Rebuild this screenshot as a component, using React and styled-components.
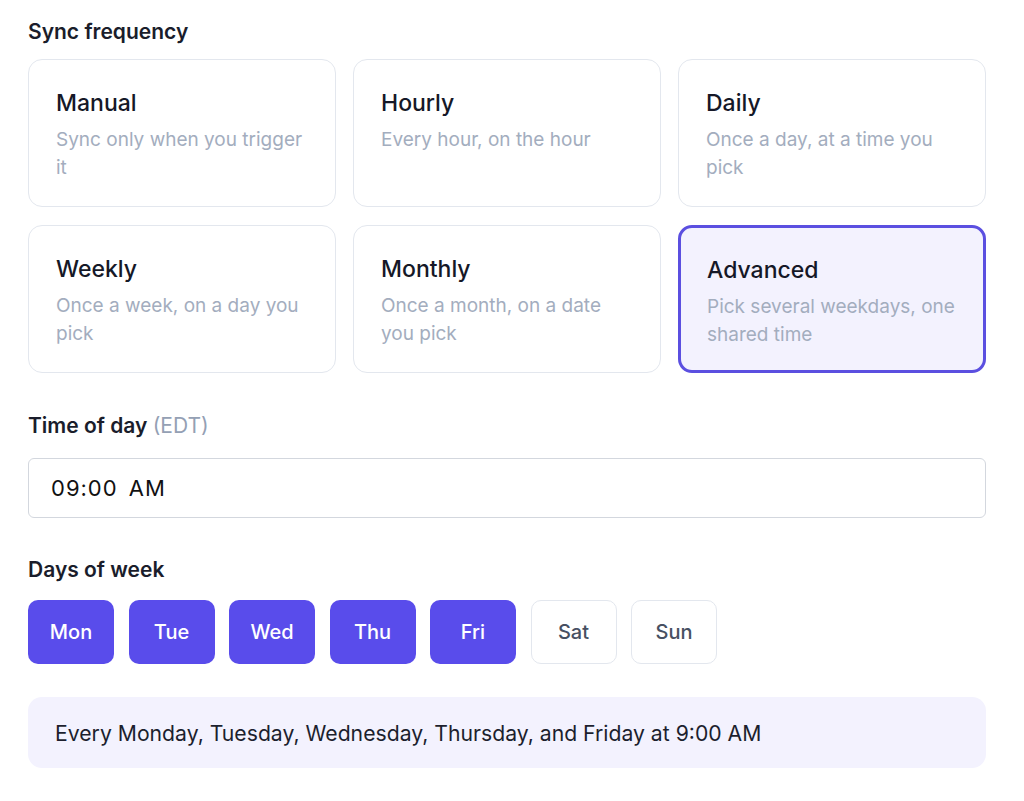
import React, {useState} from 'react';
import styled, {createGlobalStyle} from 'styled-components';

const GlobalStyle = createGlobalStyle`
  body {
    margin: 0;
    background: #ffffff;
    font-family: Inter, "Noto Sans", sans-serif;
    color: #111827;
  }
`;

const Page = styled.div`
  width: 958px;
  padding: 18px 28px 0;
  display: flex;
  flex-direction: column;
`;

const Label = styled.div`
  font-size: 21px;
  line-height: 28px;
  font-weight: 600;
  color: #1a1d2b;
  margin-top: ${p => p.$top || 0}px;
  margin-bottom: ${p => p.$bottom || 0}px;
`;

const Muted = styled.span`
  font-weight: 400;
  color: #94a0b4;
`;

const CardGrid = styled.div`
  display: grid;
  grid-template-columns: repeat(3, 1fr);
  column-gap: 17px;
  row-gap: 18px;
`;

const Card = styled.button`
  height: 148px;
  box-sizing: border-box;
  text-align: left;
  padding: ${p => (p.$active ? '27px 20px 27px 26px' : '28px 20px 28px 27px')};
  border-radius: 14px;
  border: ${p => (p.$active ? '3px solid #5b4fe0' : '1.5px solid #e3e7ee')};
  background: ${p => (p.$active ? '#f3f2fe' : '#ffffff')};
  display: flex;
  flex-direction: column;
  cursor: pointer;
  font-family: inherit;
`;

const CardTitle = styled.div`
  font-size: 23px;
  line-height: 30px;
  font-weight: 500;
  color: #151827;
  margin-bottom: 8px;
`;

const CardDesc = styled.div`
  max-width: 252px;
  font-size: 19px;
  line-height: 28px;
  color: #a3adbe;
`;

const TimeInput = styled.div`
  height: 60px;
  box-sizing: border-box;
  border: 1.5px solid #d3d7de;
  border-radius: 6px;
  padding: 0 22px;
  display: flex;
  align-items: center;
  font-size: 22px;
  letter-spacing: 1px;
  color: #111111;
  word-spacing: 4px;
`;

const DayRow = styled.div`
  display: flex;
  gap: 14.5px;
`;

const DayButton = styled.button`
  width: 86px;
  height: 64px;
  box-sizing: border-box;
  border-radius: 10px;
  border: ${p => (p.$on ? 'none' : '1.5px solid #e3e7ee')};
  background: ${p => (p.$on ? '#594ceb' : '#ffffff')};
  color: ${p => (p.$on ? '#ffffff' : '#475062')};
  font-family: inherit;
  font-size: 20px;
  font-weight: 500;
  cursor: pointer;
`;

const Summary = styled.div`
  margin-top: 33px;
  height: 71px;
  box-sizing: border-box;
  background: #f3f2fe;
  border-radius: 14px;
  padding: 0 27px;
  display: flex;
  align-items: center;
  font-size: 21.2px;
  color: #1c1f2e;
`;

const options = [
  {id: 'manual', title: 'Manual', desc: 'Sync only when you trigger it'},
  {id: 'hourly', title: 'Hourly', desc: 'Every hour, on the hour'},
  {id: 'daily', title: 'Daily', desc: 'Once a day, at a time you pick'},
  {id: 'weekly', title: 'Weekly', desc: 'Once a week, on a day you pick'},
  {id: 'monthly', title: 'Monthly', desc: 'Once a month, on a date you pick'},
  {id: 'advanced', title: 'Advanced', desc: 'Pick several weekdays, one shared time'}
];

const days = ['Mon', 'Tue', 'Wed', 'Thu', 'Fri', 'Sat', 'Sun'];

const App = () => {
  const [freq, setFreq] = useState('advanced');
  const [picked, setPicked] = useState(['Mon', 'Tue', 'Wed', 'Thu', 'Fri']);

  const toggle = d => setPicked(p => (p.includes(d) ? p.filter(x => x !== d) : [...p, d]));

  return (
    <Page>
      <GlobalStyle />
      <Label $bottom={13}>Sync frequency</Label>
      <CardGrid>
        {options.map(o => (
          <Card key={o.id} $active={freq === o.id} onClick={() => setFreq(o.id)}>
            <CardTitle>{o.title}</CardTitle>
            <CardDesc>{o.desc}</CardDesc>
          </Card>
        ))}
      </CardGrid>

      <Label $top={39} $bottom={18}>
        Time of day <Muted>(EDT)</Muted>
      </Label>
      <TimeInput>09:00 AM</TimeInput>

      <Label $top={38} $bottom={16}>Days of week</Label>
      <DayRow>
        {days.map(d => (
          <DayButton key={d} $on={picked.includes(d)} onClick={() => toggle(d)}>
            {d}
          </DayButton>
        ))}
      </DayRow>

      <Summary>Every Monday, Tuesday, Wednesday, Thursday, and Friday at 9:00 AM</Summary>
    </Page>
  );
};

export default App;
